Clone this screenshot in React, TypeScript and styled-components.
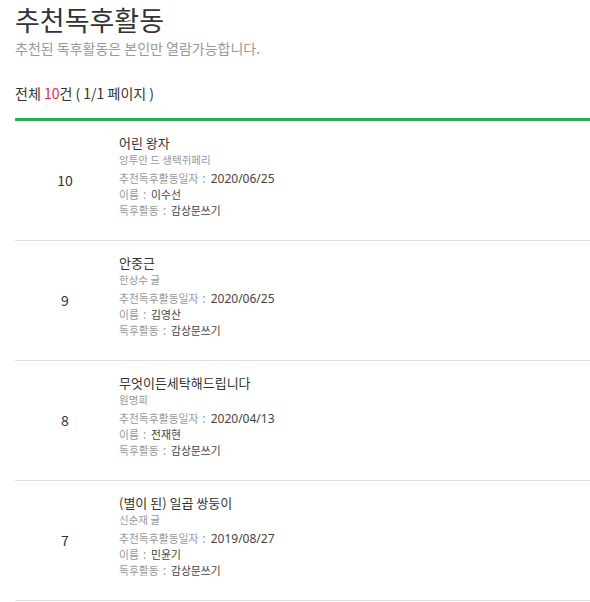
import React from "react";
import styled, { createGlobalStyle } from "styled-components";

const GlobalStyle = createGlobalStyle`
  body {
    margin: 0;
    background: #fff;
    font-family: "Noto Sans CJK KR", "Noto Sans", sans-serif;
    color: #333;
  }
`;

const items = [
  {
    no: 10,
    title: "어린 왕자",
    author: "앙투안 드 생텍쥐페리",
    date: "2020/06/25",
    name: "이수선",
    kind: "감상문쓰기",
  },
  {
    no: 9,
    title: "안중근",
    author: "한상수 글",
    date: "2020/06/25",
    name: "김영산",
    kind: "감상문쓰기",
  },
  {
    no: 8,
    title: "무엇이든세탁해드립니다",
    author: "원명희",
    date: "2020/04/13",
    name: "전재현",
    kind: "감상문쓰기",
  },
  {
    no: 7,
    title: "(별이 된) 일곱 쌍둥이",
    author: "신순재 글",
    date: "2019/08/27",
    name: "민윤기",
    kind: "감상문쓰기",
  },
];

const Row = ({ item }) => (
  <Item>
    <Num>{item.no}</Num>
    <Info>
      <BookTitle>{item.title}</BookTitle>
      <Author>{item.author}</Author>
      <Meta>
        <MetaLine>
          <Label>추천독후활동일자</Label>
          <Sep>:</Sep>
          <Value $latin>{item.date}</Value>
        </MetaLine>
        <MetaLine>
          <Label>이름</Label>
          <Sep>:</Sep>
          <Value>{item.name}</Value>
        </MetaLine>
        <MetaLine>
          <Label>독후활동</Label>
          <Sep>:</Sep>
          <Value>{item.kind}</Value>
        </MetaLine>
      </Meta>
    </Info>
  </Item>
);

export default function App() {
  return (
    <>
      <GlobalStyle />
      <Page>
        <Title>추천독후활동</Title>
        <Sub>추천된 독후활동은 본인만 열람가능합니다.</Sub>
        <Count>
          전체 <Red>10</Red>건 ( 1/1 페이지 )
        </Count>
        <List>
          {items.map((item) => (
            <Row key={item.no} item={item} />
          ))}
        </List>
      </Page>
    </>
  );
}

const Page = styled.div`
  padding-left: 15px;
  width: 575px;
`;

const Title = styled.h1`
  margin: 5px 0 0;
  font-size: 27px;
  line-height: 30px;
  font-weight: 400;
  color: #333;
`;

const Sub = styled.p`
  margin: 3px 0 0;
  font-size: 14px;
  line-height: 20px;
  color: #999;
`;

const Count = styled.p`
  margin: 25px 0 0;
  font-size: 14px;
  line-height: 20px;
  color: #333;
`;

const Red = styled.span`
  color: #f0283c;
`;

const List = styled.div`
  margin-top: 15px;
  border-top: 3px solid #1fb54a;
`;

const Item = styled.div`
  display: flex;
  height: 119px;
  border-bottom: 1px solid #ddd;
  box-sizing: content-box;
`;

const Num = styled.div`
  width: 100px;
  display: flex;
  align-items: center;
  justify-content: center;
  font-size: 14px;
  color: #333;
  padding-bottom: 2px;
`;

const Info = styled.div`
  padding-top: 14px;
  padding-left: 4px;
  display: flex;
  flex-direction: column;
`;

const BookTitle = styled.div`
  font-size: 13px;
  line-height: 16px;
  color: #333;
`;

const Author = styled.div`
  margin-top: 2px;
  font-size: 10.5px;
  line-height: 14px;
  color: #999;
`;

const Meta = styled.div`
  margin-top: 3px;
  display: flex;
  flex-direction: column;
`;

const MetaLine = styled.div`
  display: flex;
  align-items: baseline;
  height: 16px;
  font-size: 10.8px;
  line-height: 16px;
`;

const Label = styled.span`
  color: #999;
`;

const Sep = styled.span`
  margin: 0 5px 0 4px;
  font-family: "Noto Sans", sans-serif;
  font-size: 12px;
  color: #999;
`;

const Value = styled.span`
  color: #444;
  font-family: ${(p) =>
    p.$latin ? '"Noto Sans", sans-serif' : '"Noto Sans CJK KR", sans-serif'};
  font-size: ${(p) => (p.$latin ? "12px" : "10.8px")};
`;
